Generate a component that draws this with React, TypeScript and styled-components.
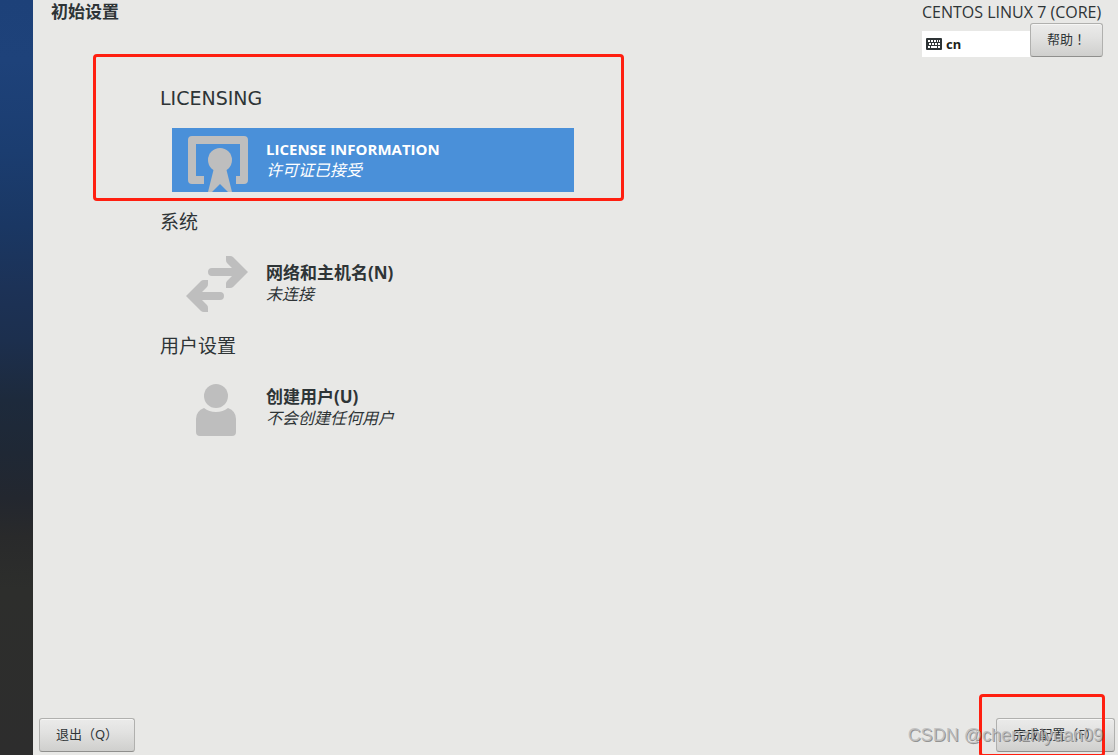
import React from "react";
import styled, { createGlobalStyle } from "styled-components";

const GlobalStyle = createGlobalStyle`
  *, *::before, *::after { box-sizing: border-box; }
  body {
    margin: 0;
    background: #e8e8e6;
    color: #2e3436;
    font-family: "Noto Sans", "Noto Sans CJK SC", sans-serif;
  }
  h1, h2, p { margin: 0; }
`;

const Screen = styled.div`
  position: relative;
  display: grid;
  grid-template-columns: 33px minmax(0, 1fr);
  min-height: 100vh;
  overflow: hidden;
`;

const Sidebar = styled.aside`
  background: linear-gradient(
    180deg,
    #1d4179 0%,
    #1e427a 8%,
    #1b3d70 20%,
    #1a3763 30%,
    #1c3257 38%,
    #1c2f4e 45%,
    #1d2a3c 53%,
    #1f2835 60%,
    #23272f 66%,
    #292a2b 71%,
    #2d2e2c 78%,
    #2d2d2d 100%
  );
`;

const Panel = styled.div`
  display: flex;
  flex-direction: column;
`;

const Header = styled.header`
  display: flex;
  justify-content: space-between;
  align-items: flex-start;
  height: 80px;
  padding: 0 15px 0 18px;
`;

const Title = styled.h1`
  font-size: 17px;
  line-height: 24px;
  font-weight: 700;
`;

const HeaderSide = styled.div`
  width: 181px;
`;

const Product = styled.p`
  height: 23px;
  font-family: "Open Sans", "Noto Sans", sans-serif;
  font-size: 16px;
  line-height: 24px;
  white-space: nowrap;
`;

const Tools = styled.div`
  display: flex;
  align-items: flex-end;
`;

const Layout = styled.div`
  display: flex;
  flex: 1;
  align-items: center;
  gap: 4px;
  height: 26px;
  padding-left: 4px;
  background: #fff;
  color: #1c1f20;
  font-size: 13px;
  line-height: 24px;
  font-weight: 700;
`;

const Button = styled.button<{ $width: number }>`
  width: ${(p) => p.$width}px;
  height: 34px;
  padding: 0 0 2px;
  border: 1px solid #b0b0ae;
  border-bottom-color: #8f8f8d;
  border-radius: 3px;
  background: linear-gradient(180deg, #ebebea, #e2e2e1 40%, #cfcfcd);
  box-shadow: inset 0 1px 0 #f6f6f5;
  color: #2e3436;
  font-family: "Noto Sans", "Noto Sans CJK SC", sans-serif;
  font-size: 13px;
  line-height: 20px;
  white-space: nowrap;
`;

const HelpButton = styled(Button)`
  font-family: "Noto Sans CJK TC", sans-serif;
`;

const Main = styled.main`
  flex: 1;
  padding-left: 127px;
`;

const Category = styled.section`
  height: 124px;
`;

const CategoryTitle = styled.h2`
  height: 48px;
  font-family: "DejaVu Sans", "Noto Sans CJK SC", sans-serif;
  font-size: 19px;
  line-height: 36px;
  font-weight: 400;
`;

const Spoke = styled.button<{ $selected?: boolean }>`
  display: flex;
  align-items: center;
  gap: 18px;
  width: 402px;
  max-width: 100%;
  height: 64px;
  margin-left: 12px;
  padding: 0 12px;
  border: 0;
  background: ${(p) => (p.$selected ? "#4a90d9" : "transparent")};
  color: ${(p) => (p.$selected ? "#fff" : "#2e3436")};
  text-align: left;
`;

const SpokeIcon = styled.svg`
  flex: none;
  width: 64px;
  height: 64px;
  fill: #bebebe;
`;

const SpokeText = styled.span`
  display: flex;
  flex-direction: column;
  padding-bottom: 2px;
  font-family: "Noto Sans", "Noto Sans CJK SC", sans-serif;
`;

const SpokeName = styled.span<{ $latin?: boolean }>`
  font-family: ${(p) => (p.$latin ? '"Open Sans", sans-serif' : "inherit")};
  font-size: ${(p) => (p.$latin ? 15 : 17)}px;
  line-height: 22px;
  font-weight: 700;
`;

const SpokeStatus = styled.span`
  font-size: 16px;
  line-height: 20px;
  font-style: italic;
`;

const Footer = styled.footer`
  display: flex;
  justify-content: space-between;
  padding: 0 3px 3px 6px;
`;

const Mark = styled.div`
  position: absolute;
  border: 3px solid #ff1f10;
  border-radius: 4px;
  pointer-events: none;
`;

const LicenseMark = styled(Mark)`
  top: 54px;
  left: 93px;
  width: 531px;
  height: 147px;
`;

const FinishMark = styled(Mark)`
  right: 13px;
  bottom: -2px;
  width: 126px;
  height: 63px;
`;

const Watermark = styled.span`
  position: absolute;
  right: 15px;
  bottom: 8px;
  color: rgba(190, 190, 190, 0.9);
  font-family: "Liberation Sans", sans-serif;
  font-size: 18px;
  line-height: 24px;
  text-shadow: 1px 1px 0 rgba(90, 90, 90, 0.6);
  white-space: nowrap;
  pointer-events: none;
`;

const KeyboardIcon = () => (
  <svg width="16" height="12" viewBox="0 0 16 12" aria-hidden="true">
    <rect width="16" height="12" rx="1" fill="#2e3436" />
    <path
      d="M2 2h2v2H2zM5 2h2v2H5zM8 2h2v2H8zM11 2h1v2h-1zM13 2h1v2h-1zM3 5h2v2H3zM6 5h2v2H6zM9 5h2v2H9zM12 5h2v2h-2zM2 8h2v2H2zM5 8h6v2H5zM12 8h2v2h-2z"
      fill="#fff"
    />
  </svg>
);

const LicenseIcon = () => (
  <SpokeIcon viewBox="0 0 64 64" aria-hidden="true">
    <path d="M8 8h52a4 4 0 0 1 4 4v40a4 4 0 0 1-4 4h-8v-8h4V16H12v32h8v8H8a4 4 0 0 1-4-4V12a4 4 0 0 1 4-4z" />
    <circle cx="36" cy="32" r="12" />
    <path d="M30 40h12l6 24h-4l-8-8-8 8h-4z" />
  </SpokeIcon>
);

const NetworkIcon = () => (
  <SpokeIcon viewBox="0 0 64 64" aria-hidden="true">
    <path d="M42 4h4q2 0 3 1l15 15-15 15q-1 1-3 1h-4v-4q0-2 1-3l5-5H28a4 4 0 0 1 0-8h20l-5-5q-1-1-1-3z" />
    <path d="M24 28h-4q-2 0-3 1L2 44l15 15q1 1 3 1h4v-4q0-2-1-3l-5-5h18a4 4 0 0 0 0-8H18l5-5q1-1 1-3z" />
  </SpokeIcon>
);

const UserIcon = () => (
  <SpokeIcon viewBox="0 0 64 64" aria-hidden="true">
    <circle cx="32" cy="20" r="12" />
    <path d="M20 32q5 4 12 4t12-4q8 3 8 11v13a4 4 0 0 1-4 4H16a4 4 0 0 1-4-4V43q0-8 8-11z" />
  </SpokeIcon>
);

const categories = [
  { title: "LICENSING", name: "LICENSE INFORMATION", status: "许可证已接受", Icon: LicenseIcon, selected: true },
  { title: "系统", name: "网络和主机名(N)", status: "未连接", Icon: NetworkIcon, selected: false },
  { title: "用户设置", name: "创建用户(U)", status: "不会创建任何用户", Icon: UserIcon, selected: false },
];

export default function App() {
  return (
    <Screen lang="zh-CN">
      <GlobalStyle />
      <Sidebar />
      <Panel>
        <Header>
          <Title>初始设置</Title>
          <HeaderSide>
            <Product>CENTOS LINUX 7 (CORE)</Product>
            <Tools>
              <Layout>
                <KeyboardIcon />
                cn
              </Layout>
              <HelpButton type="button" lang="zh-TW" $width={73}>帮助！</HelpButton>
            </Tools>
          </HeaderSide>
        </Header>
        <Main>
          {categories.map(({ title, name, status, Icon, selected }) => (
            <Category key={title}>
              <CategoryTitle>{title}</CategoryTitle>
              <Spoke type="button" $selected={selected}>
                <Icon />
                <SpokeText>
                  <SpokeName $latin={selected}>{name}</SpokeName>
                  <SpokeStatus>{status}</SpokeStatus>
                </SpokeText>
              </Spoke>
            </Category>
          ))}
        </Main>
        <Footer>
          <Button type="button" $width={96}>退出（Q）</Button>
          <Button type="button" $width={119}>完成配置（F）</Button>
        </Footer>
      </Panel>
      <LicenseMark />
      <FinishMark />
      <Watermark>CSDN @chenzhiyuan09</Watermark>
    </Screen>
  );
}
